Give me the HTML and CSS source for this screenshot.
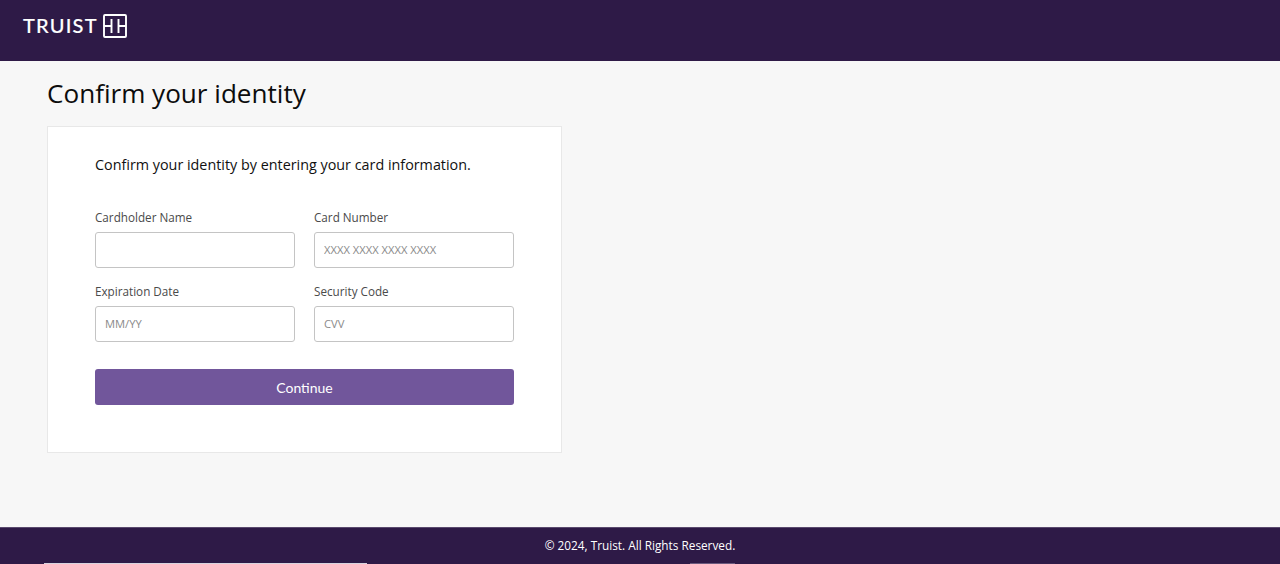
FILE: index.html
```html
<!DOCTYPE html>
<html lang="en">
<head>
<meta charset="utf-8">
<title>Confirm your identity</title>
<link rel="stylesheet" href="styles.css">
</head>
<body>
<header class="topbar">
  <div class="logo">
    <span class="logo-word">TRUIST</span>
    <svg class="logo-mark" width="24" height="24" viewBox="0 0 24 24" fill="none" stroke="#fff" stroke-width="1.9">
      <rect x="1" y="1" width="22" height="22" rx="1"/>
      <path d="M1 12h8M8.5 5v14M15.5 5v14M15 12h8"/>
    </svg>
  </div>
</header>
<main class="content">
  <h1 class="title">Confirm your identity</h1>
  <section class="card">
    <p class="intro">Confirm your identity by entering your card information.</p>
    <form class="fields">
      <label class="field"><span class="label">Cardholder Name</span><input class="input" type="text"></label>
      <label class="field"><span class="label">Card Number</span><input class="input" type="text" placeholder="XXXX XXXX XXXX XXXX"></label>
      <label class="field"><span class="label">Expiration Date</span><input class="input" type="text" placeholder="MM/YY"></label>
      <label class="field"><span class="label">Security Code</span><input class="input" type="text" placeholder="CVV"></label>
      <button class="submit" type="button">Continue</button>
    </form>
  </section>
</main>
<footer class="footer">© 2024, Truist. All Rights Reserved.<span class="edge edge-long"></span><span class="edge edge-short"></span></footer>
</body>
</html>
```
FILE: styles.css
```css
* { box-sizing: border-box; }
html, body { height: 100%; }
body {
  margin: 0;
  display: flex;
  flex-direction: column;
  background: #f7f7f7;
  font-family: "Open Sans", "Noto Sans", sans-serif;
  color: #111;
  overflow: hidden;
}
.topbar {
  height: 61px;
  flex: none;
  background: #2e1a47;
  padding: 14px 0 0 23px;
}
.logo { display: flex; align-items: flex-start; gap: 6px; height: 24px; color: #fff; }
.logo-word {
  width: 74px;
  font-family: "Lato", sans-serif;
  font-size: 20px;
  font-weight: 500;
  letter-spacing: 1.2px;
  line-height: 22px;
  white-space: nowrap;
  -webkit-text-stroke: 0.15px #fff;
}
.logo-mark { display: block; flex: none; }
.content { flex: 1; padding: 0 0 0 47px; }
.title {
  margin: 0;
  padding-top: 14px;
  height: 65px;
  font-size: 26.1px;
  line-height: 36px;
  font-weight: 400;
  color: #0c0c0c;
}
.card {
  width: 515px;
  height: 327px;
  background: #fff;
  border: 1px solid #e8e8e8;
  padding: 27px 47px 0;
}
.intro { margin: 0 0 33px; font-size: 14.35px; line-height: 22px; color: #111; }
.fields {
  display: grid;
  grid-template-columns: 200px 200px;
  column-gap: 19px;
  row-gap: 15px;
}
.field { display: flex; flex-direction: column; }
.label { font-size: 11.7px; line-height: 16px; height: 23px; color: #4a4a4a; }
.input {
  width: 100%;
  height: 36px;
  border: 1px solid #c4c4c4;
  border-radius: 3px;
  background: #fff;
  padding: 0 9px 2px;
  font-family: inherit;
  font-size: 11.2px;
  outline: none;
}
.input::placeholder { color: #8a8a8a; opacity: 1; }
.submit {
  grid-column: 1 / -1;
  height: 36px;
  margin-top: 12px;
  border: 0;
  border-radius: 3px;
  background: #71569b;
  color: #fff;
  font-family: "Lato", sans-serif;
  font-size: 14px;
}
.footer {
  position: relative;
  height: 37px;
  flex: none;
  background: #2e1a47;
  border-top: 1px solid #5a4a6e;
  color: #fff;
  text-align: center;
  font-size: 11.8px;
  font-weight: 500;
  line-height: 35px;
}
.edge { position: absolute; bottom: 0; height: 1px; }
.edge-long { left: 44px; width: 323px; background: #d8d4e0; }
.edge-short { left: 690px; width: 45px; background: #6a5a7e; }
```
